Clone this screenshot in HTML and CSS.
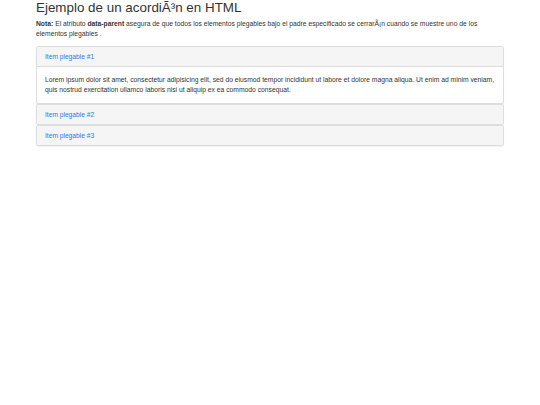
FILE: index.html
```html
<!DOCTYPE html>
<html lang="es">
<head>
<meta charset="utf-8">
<title>Acordeón</title>
<link rel="stylesheet" href="styles.css">
</head>
<body>
<div class="container">
  <h2 class="title">Ejemplo de un acordiÃ³n en HTML</h2>
  <p class="note"><strong>Nota:</strong> El atributo <strong>data-parent</strong> asegura de que todos los elementos plegables bajo el padre especificado se cerrarÃ¡n cuando se muestre uno de los elementos plegables .</p>
  <div class="panel-group">
    <div class="panel">
      <div class="panel-heading"><h4 class="panel-title"><a href="#c1">Item plegable #1</a></h4></div>
      <div class="panel-body">Lorem ipsum dolor sit amet, consectetur adipisicing elit, sed do eiusmod tempor incididunt ut labore et dolore magna aliqua. Ut enim ad minim veniam, quis nostrud exercitation ullamco laboris nisi ut aliquip ex ea commodo consequat.</div>
    </div>
    <div class="panel">
      <div class="panel-heading"><h4 class="panel-title"><a href="#c2">Item plegable #2</a></h4></div>
    </div>
    <div class="panel">
      <div class="panel-heading"><h4 class="panel-title"><a href="#c3">Item plegable #3</a></h4></div>
    </div>
  </div>
</div>
</body>
</html>
```
FILE: styles.css
```css
html, body {
  margin: 0;
  padding: 0;
  background: #fff;
}
body {
  font-family: "Liberation Sans", Arial, Helvetica, sans-serif;
  font-size: 6.75px;
  line-height: 10px;
  color: #333;
}
.container {
  width: 468px;
  margin: 0 auto;
}
.title {
  font-size: 13.4px;
  font-weight: 500;
  line-height: 14.7px;
  margin: 0.5px 0 3.8px;
}
.note {
  margin: 0 0 7px;
}
.note strong {
  font-weight: bold;
}
.panel-group {
  margin-bottom: 10px;
}
.panel {
  background: #fff;
  border: 1px solid #ddd;
  border-radius: 2px;
  box-shadow: 0 1px 1px rgba(0,0,0,.05);
}
.panel-heading {
  background: #f5f5f5;
  padding: 4.5px 8px;
}
.panel-title {
  margin: 0;
  font-size: 6.65px;
  font-weight: 500;
  line-height: 10px;
}
.panel-title a {
  color: #1a7fe8;
  text-decoration: none;
}
.panel-body {
  padding: 8px;
  border-top: 1px solid #ddd;
}
```
